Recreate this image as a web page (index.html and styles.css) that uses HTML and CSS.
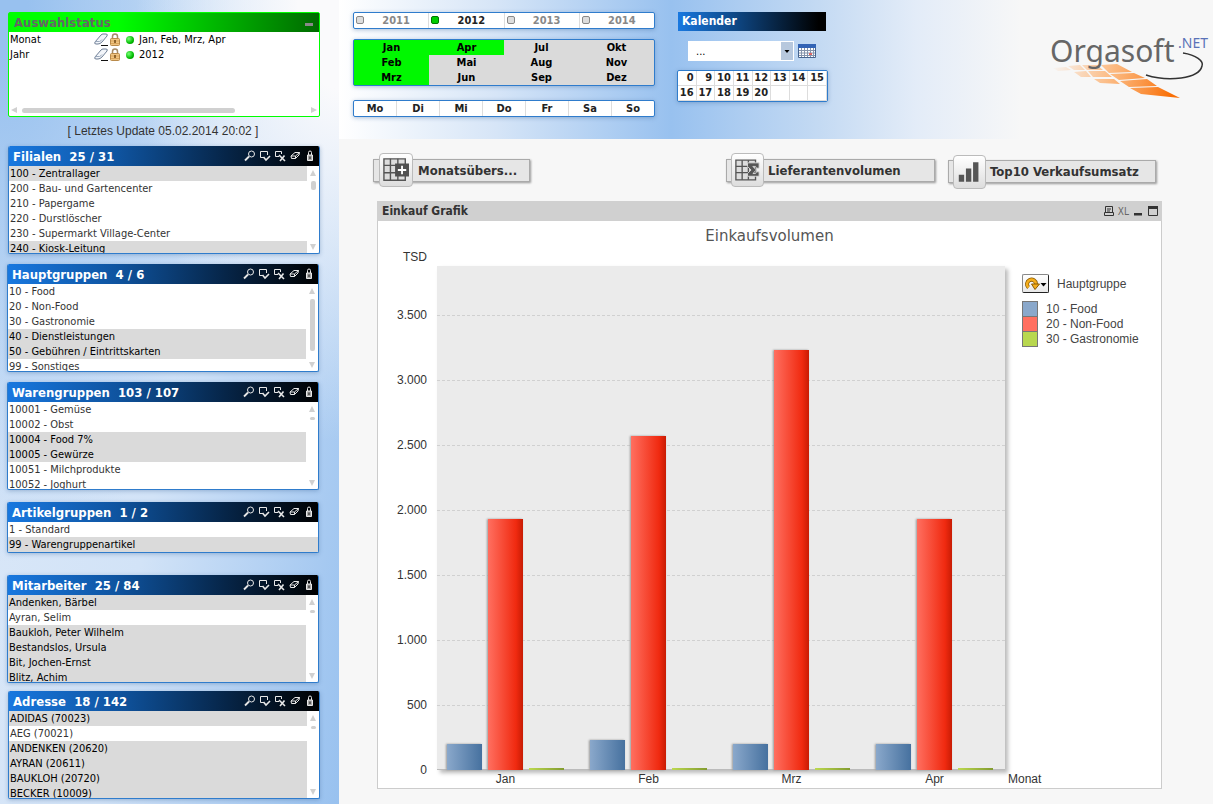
FILE: index.html
```html
<!DOCTYPE html>
<html lang="de">
<head>
  <meta charset="UTF-8">
  <meta name="viewport" content="width=device-width, initial-scale=1.0">
  <title>Orgasoft.NET - Einkauf</title>
  <link rel="stylesheet" href="styles.css">
</head>
<body>
  <!-- Icons -->
  <svg class="sprite" aria-hidden="true">
    <symbol id="i-search" viewBox="0 0 12 12"><circle cx="7.5" cy="4" r="3"/><path d="M5 6.500L1 10.500" stroke-width="1.800"/></symbol>
    <symbol id="i-check" viewBox="0 0 12 12"><path d="M5 7.500H1.500V1.500H8.500V5"/><path d="M4.500 7L7 10L11 6" stroke-width="1.600"/></symbol>
    <symbol id="i-cross" viewBox="0 0 12 12"><path d="M5 6.500H1.500V1.500H7.500V4"/><path d="M5 5L11 11M10.500 5.500L6 11" stroke-width="1.600"/></symbol>
    <symbol id="i-clear" viewBox="0 0 12 12"><path d="M2 6L6 2.500H10.500L10 5L6.500 8.500H2.500ZM2 6H6.500L10.500 2.500M6.500 6V8.500"/></symbol>
    <symbol id="i-lock" viewBox="0 0 12 12"><path d="M4.500 5V2.500Q4.500 1 6 1T7.500 2.500V5"/><path d="M3.500 5H8.500V10.500H3.500Z" fill="#aaa"/><path d="M6 6.500V9" stroke="#111"/></symbol>
    <symbol id="i-eraser" viewBox="0 0 15 13"><path d="M1 9L7 2Q8 1 9 1H12Q14 1 13 3L8 9Q6 11 4 11H2Q0 11 1 9Z" fill="#f2f5fa" stroke="#6f7f96"/><path d="M1.500 8.500H5.500Q7 8 8 6.500" fill="none" stroke="#9caabd"/><path d="M7 12.500H14" stroke="#111"/></symbol>
    <symbol id="i-goldlock" viewBox="0 0 12 13"><path d="M3.500 6V3.500Q3.500 1 6 1T8.500 3.500V6" fill="none" stroke="#a58a66" stroke-width="1.500"/><rect x="1.500" y="5.500" width="9" height="7" rx="1" fill="#f0c583" stroke="#b98a4a"/><path d="M2 8H10M2 10.500H10" stroke="#d9a55c"/><path d="M6 7V10" stroke="#704915" stroke-width="1.500"/></symbol>
  </svg>

  <aside class="sidebar">
    <section class="status">
      <header class="status-head"><h2>Auswahlstatus</h2><button class="minimize" aria-label="Minimieren"></button></header>
      <div class="status-body">
        <div class="status-row"><span class="field">Monat</span><svg class="eraser"><use href="#i-eraser"/></svg><svg class="goldlock"><use href="#i-goldlock"/></svg><i class="dot"></i><span>Jan, Feb, Mrz, Apr</span></div>
        <div class="status-row"><span class="field">Jahr</span><svg class="eraser"><use href="#i-eraser"/></svg><svg class="goldlock"><use href="#i-goldlock"/></svg><i class="dot"></i><span>2012</span></div>
      </div>
      <div class="hscroll"><i class="arrow left"></i><i class="track"><i class="thumb"></i></i><i class="arrow right"></i></div>
    </section>
    <p class="update">[ Letztes Update 05.02.2014 20:02 ]</p>

    <section class="panel wide">
      <header class="panel-head"><h2>Filialen&nbsp; 25 / 31</h2><div class="tools"></div></header>
      <div class="panel-body">
        <ul class="list">
          <li class="out">100 - Zentrallager</li>
          <li>200 - Bau- und Gartencenter</li>
          <li>210 - Papergame</li>
          <li>220 - Durstlöscher</li>
          <li>230 - Supermarkt Village-Center</li>
          <li class="out">240 - Kiosk-Leitung</li>
        </ul>
        <div class="vscroll"><i class="arrow up"></i><i class="thumb medium"></i><i class="arrow down"></i></div>
      </div>
    </section>

    <section class="panel">
      <header class="panel-head"><h2>Hauptgruppen&nbsp; 4 / 6</h2><div class="tools"></div></header>
      <div class="panel-body">
        <ul class="list">
          <li>10 - Food</li>
          <li>20 - Non-Food</li>
          <li>30 - Gastronomie</li>
          <li class="out">40 - Dienstleistungen</li>
          <li class="out">50 - Gebühren / Eintrittskarten</li>
          <li>99 - Sonstiges</li>
        </ul>
        <div class="vscroll"><i class="arrow up"></i><i class="thumb long"></i><i class="arrow down"></i></div>
      </div>
    </section>

    <section class="panel goods">
      <header class="panel-head"><h2>Warengruppen&nbsp; 103 / 107</h2><div class="tools"></div></header>
      <div class="panel-body">
        <ul class="list">
          <li>10001 - Gemüse</li>
          <li>10002 - Obst</li>
          <li class="out">10004 - Food 7%</li>
          <li class="out">10005 - Gewürze</li>
          <li>10051 - Milchprodukte</li>
          <li>10052 - Joghurt</li>
        </ul>
        <div class="vscroll"><i class="arrow up"></i><i class="thumb"></i><i class="arrow down"></i></div>
      </div>
    </section>

    <section class="panel articles">
      <header class="panel-head"><h2>Artikelgruppen&nbsp; 1 / 2</h2><div class="tools"></div></header>
      <div class="panel-body">
        <ul class="list">
          <li>1 - Standard</li>
          <li class="out">99 - Warengruppenartikel</li>
        </ul>
      </div>
    </section>

    <section class="panel staff">
      <header class="panel-head"><h2>Mitarbeiter&nbsp; 25 / 84</h2><div class="tools"></div></header>
      <div class="panel-body">
        <ul class="list">
          <li class="out">Andenken, Bärbel</li>
          <li>Ayran, Selim</li>
          <li class="out">Baukloh, Peter Wilhelm</li>
          <li class="out">Bestandslos, Ursula</li>
          <li class="out">Bit, Jochen-Ernst</li>
          <li class="out">Blitz, Achim</li>
        </ul>
        <div class="vscroll"><i class="arrow up"></i><i class="thumb"></i><i class="arrow down"></i></div>
      </div>
    </section>

    <section class="panel wide address">
      <header class="panel-head"><h2>Adresse&nbsp; 18 / 142</h2><div class="tools"></div></header>
      <div class="panel-body">
        <ul class="list">
          <li class="out">ADIDAS (70023)</li>
          <li>AEG (70021)</li>
          <li class="out">ANDENKEN (20620)</li>
          <li class="out">AYRAN (20611)</li>
          <li class="out">BAUKLOH (20720)</li>
          <li class="out">BECKER (10009)</li>
        </ul>
        <div class="vscroll"><i class="arrow up"></i><i class="thumb"></i><i class="arrow down"></i></div>
      </div>
    </section>
  </aside>

  <main class="main">
    <header class="topbar">
      <div class="periods">
        <div class="years">
          <button><i></i><span>2011</span></button>
          <button class="on"><i></i><span>2012</span></button>
          <button><i></i><span>2013</span></button>
          <button><i></i><span>2014</span></button>
        </div>
        <div class="months">
          <button class="on">Jan</button><button class="on">Feb</button><button class="on">Mrz</button>
          <button class="on">Apr</button><button>Mai</button><button>Jun</button>
          <button>Jul</button><button>Aug</button><button>Sep</button>
          <button>Okt</button><button>Nov</button><button>Dez</button>
        </div>
        <div class="weekdays">
          <button>Mo</button><button>Di</button><button>Mi</button><button>Do</button><button>Fr</button><button>Sa</button><button>So</button>
        </div>
      </div>

      <div class="calendar">
        <h2><label for="datum">Kalender</label></h2>
        <div class="date">
          <div class="combo">
            <select id="datum"><option>...</option></select>
            <svg viewBox="0 0 12 18" aria-hidden="true"><path d="M0 0H12V18H0Z" fill="#b7c8dd"/><path d="M3.500 8H8.500L6 11Z"/></svg>
          </div>
          <button class="pick" aria-label="Datum wählen">
            <svg viewBox="0 0 18 14"><path d="M0.500 0.500H17.500V13.500H0.500Z" fill="#fff" stroke="#46648f"/><path d="M0 0H18V4H0Z" fill="#3263b5"/><path d="M1 6.500H17M1 9H17M1 11.500H17M3.500 4V13M6.500 4V13M9.500 4V13M12.500 4V13M15.500 4V13" stroke="#8493ab"/><path d="M11 9H14V11H11Z" fill="#d66"/></svg>
          </button>
        </div>
        <div class="days">
          <button>0</button><button>9</button><button>10</button><button>11</button><button>12</button><button>13</button><button>14</button><button>15</button>
          <button>16</button><button>17</button><button>18</button><button>19</button><button>20</button><span></span><span></span><span></span>
        </div>
      </div>

      <svg class="logo" viewBox="0 0 163 75" role="img" aria-label="Orgasoft.NET">
        <defs>
          <linearGradient id="tiles" gradientUnits="userSpaceOnUse" x1="0" y1="36" x2="120" y2="66">
            <stop offset="0" stop-color="#fda55a" stop-opacity="0"/>
            <stop offset="0.5" stop-color="#fda55a" stop-opacity="0.75"/>
            <stop offset="1" stop-color="#f96f06"/>
          </linearGradient>
        </defs>
        <g fill="url(#tiles)">
          <path d="M3 37L16 36L21 39L8 40ZM18 35L30 34L35 39L24 39ZM24 41L36 40L41 46L31 46Z"/>
          <path d="M32 34H47L53 39H37ZM38 40H55L62 46H43ZM44 48H64L70 53L50 52Z"/>
          <path d="M51 34L67 33L82 41L59 42ZM60 43L84 42L95 47L69 49ZM70 50L97 48L107 55L79 56ZM80 57L108 56L130 67L91 63Z"/>
        </g>
        <path d="M133 22C146 24 154 30 152 35C149 48 118 51 96 44" fill="none" stroke="#333" stroke-width="1.500"/>
        <text x="0" y="31" class="brand">Orgasoft</text>
        <text x="128" y="17" class="net">.NET</text>
      </svg>
    </header>

    <nav class="actions">
      <button class="action month">
        <svg viewBox="0 0 28 28"><path d="M1 2H24V25H1Z" fill="#ddd" stroke="#555" stroke-width="1.500"/><path d="M1 9H24M1 17H24M8 2V25M16 2V25" stroke="#555" stroke-width="1.500"/><path d="M13 7H28V21H13Z" fill="#505050"/><path d="M16 14H25M20.500 9.500V18.500" stroke="#fff" stroke-width="2"/></svg>
        <span>Monatsübers...</span>
      </button>
      <button class="action supplier">
        <svg viewBox="0 0 28 28"><path d="M1 3H23V25H1Z" fill="#ddd" stroke="#555" stroke-width="1.500"/><path d="M1 10H23M1 17H23M8 3V25M15 3V25" stroke="#555" stroke-width="1.500"/><path d="M14 6H27V12H24L23 10H20L24 14L20 18H23L24 16H27V21H14V18L18 14L14 10Z" fill="#555" stroke="#ddd"/></svg>
        <span>Lieferantenvolumen</span>
      </button>
      <button class="action top10">
        <svg viewBox="0 0 28 28"><path d="M2 17H8V25H2ZM10 10H16V25H10ZM18 3H24V25H18Z" fill="#555"/></svg>
        <span>Top10 Verkaufsumsatz</span>
      </button>
    </nav>

    <section class="chart">
      <header class="chart-head">
        <h2>Einkauf Grafik</h2>
        <button aria-label="Drucken"><svg viewBox="0 0 12 12"><path d="M2.500 7V1.500H9.500V7M1.500 7.500H10.500V10.500H1.500ZM4 4H8M4 6H7" fill="none" stroke="#333"/></svg></button>
        <button class="xl">XL</button>
        <button aria-label="Minimieren"><svg viewBox="0 0 12 12"><path d="M2 8H10V10.500H2Z" fill="#333"/></svg></button>
        <button aria-label="Maximieren"><svg viewBox="0 0 12 12"><path d="M1.500 1.500H10.500V10.500H1.500Z" fill="none" stroke="#333"/><path d="M1 1H11V4H1Z" fill="#333"/></svg></button>
      </header>
      <h3>Einkaufsvolumen</h3>
      <div class="chart-body">
        <div class="unit">TSD</div>
        <div class="ticks"><span>3.500</span><span>3.000</span><span>2.500</span><span>2.000</span><span>1.500</span><span>1.000</span><span>500</span><span>0</span></div>
        <div class="grid"><i></i><i></i><i></i><i></i><i></i><i></i><i></i></div>
        <div class="bars" id="bars"></div>
        <div class="labels" id="labels"></div>
        <div class="axis-name">Monat</div>
        <div class="legend">
          <div class="legend-head">
            <button aria-label="Gruppe wechseln"><svg viewBox="0 0 25 17"><path d="M5.500 12.500A4.500 4.500 0 1 1 13 9" fill="none" stroke="#8a5a00" stroke-width="4"/><path d="M5.500 12.500A4.500 4.500 0 1 1 13 9" fill="none" stroke="#f5ae1c" stroke-width="2.500"/><path d="M8.500 9H16.500L12 14.500Z" fill="#f5ae1c" stroke="#8a5a00"/><path d="M17.500 8H23.500L20.500 11.500Z"/></svg></button>
            <span>Hauptgruppe</span>
          </div>
          <div class="key"><i class="food"></i>10 - Food</div>
          <div class="key"><i class="nonfood"></i>20 - Non-Food</div>
          <div class="key"><i class="gastro"></i>30 - Gastronomie</div>
        </div>
      </div>
    </section>
  </main>

  <script>
    // Einkaufsvolumen in TSD
    const werte = [
      { monat: 'Jan', food: 200, nonfood: 1930, gastro: 14 },
      { monat: 'Feb', food: 230, nonfood: 2570, gastro: 14 },
      { monat: 'Mrz', food: 200, nonfood: 3230, gastro: 14 },
      { monat: 'Apr', food: 200, nonfood: 1930, gastro: 14 }
    ];
    const max = 3877;

    document.getElementById('bars').innerHTML = werte.map(w => `
      <div class="group">${['food', 'nonfood', 'gastro'].map(k =>
        `<i class="${k}" style="height:${w[k] / max * 100}%"></i>`).join('')}</div>`).join('');
    document.getElementById('labels').innerHTML = werte.map(w => `<span>${w.monat}</span>`).join('');

    const tools = [['search', 'Suchen'], ['check', 'Alle auswählen'], ['cross', 'Ausgeschlossene auswählen'], ['clear', 'Löschen'], ['lock', 'Sperren']];
    document.querySelectorAll('.tools').forEach(el => {
      el.innerHTML = tools.map(([id, label]) =>
        `<button aria-label="${label}"><svg><use href="#i-${id}"/></svg></button>`).join('');
    });
  </script>
</body>
</html>
```
FILE: styles.css
```css
* {
  box-sizing: border-box;
}
body {
  margin: 0;
  min-height: 100vh;
  display: flex;
  background: #f7f7f7;
  font-family: "DejaVu Sans Condensed", "DejaVu Sans", sans-serif;
  font-size: 11px;
  line-height: 15px;
  color: #333;
}
h2, h3, p, ul {
  margin: 0;
  padding: 0;
  font-weight: normal;
}
button {
  margin: 0;
  padding: 0;
  border: none;
  background: none;
  font: inherit;
  color: inherit;
  cursor: pointer;
}
svg {
  display: block;
}
.sprite {
  display: none;
}

/* Sidebar */
.sidebar {
  flex: 0 0 339px;
  padding: 12px 20px 5px 7px;
  background:
    radial-gradient(ellipse 60% 55% at 100% 0, #fafafc 20%, rgba(250, 250, 252, 0) 100%),
    radial-gradient(ellipse 80% 70% at 0 0, #98c1ef 10%, rgba(152, 193, 239, 0) 100%),
    linear-gradient(100deg, #dbe8f8 0%, #d2e3f7 50%, #98c1ef 100%);
}
.status {
  height: 105px;
  margin: 0 -1px 0 1px;
  border: 1px solid #0f0;
  border-radius: 2px;
  background: #fff;
  color: #000;
  display: flex;
  flex-direction: column;
}
.status-head {
  display: flex;
  justify-content: space-between;
  align-items: center;
  height: 19px;
  padding: 0 6px 0 5px;
  background: linear-gradient(90deg, #0f0 0%, #0f0 35%, #006a00 100%);
}
.status-head h2 {
  font-size: 13px;
  font-weight: bold;
  color: #666;
}
.minimize {
  width: 8px;
  height: 3px;
  margin-top: 4px;
  background: #888;
}
.status-body {
  flex: 1;
}
.status-row {
  display: flex;
  align-items: center;
  height: 15px;
  padding-left: 1px;
}
.field {
  width: 84px;
}
.eraser {
  width: 15px;
  height: 13px;
}
.goldlock {
  width: 12px;
  height: 13px;
}
.dot {
  width: 8px;
  height: 8px;
  margin: 0 5px;
  border-radius: 50%;
  background: radial-gradient(circle at 35% 35%, #7f7, #0b0 60%, #070);
}
.hscroll {
  display: flex;
  align-items: center;
  height: 12px;
  padding: 0 2px;
}
.hscroll .track {
  flex: 1;
  margin: 0 5px;
}
.hscroll .thumb {
  display: block;
  width: 75%;
  height: 5px;
  border-radius: 3px;
  background: #d0d0d0;
}
.arrow {
  border: 3px solid transparent;
}
.arrow.left {
  border-left: 0;
  border-right: 6px solid #d0d0d0;
}
.arrow.right {
  border-right: 0;
  border-left: 6px solid #d0d0d0;
}
.arrow.up {
  border-top: 0;
  border-bottom: 6px solid #d0d0d0;
}
.arrow.down {
  border-bottom: 0;
  border-top: 6px solid #d0d0d0;
  margin-top: auto;
}
.update {
  height: 29px;
  padding-top: 6px;
  text-align: center;
  font: 12px/16px "Liberation Sans", Arial, sans-serif;
}
.panel {
  height: 108px;
  margin-bottom: 10px;
  border: 1px solid #2f7ccc;
  border-top: 0;
  border-radius: 2px;
  background: #fff;
  overflow: hidden;
  box-shadow: 0 1px 4px rgba(70, 110, 160, 0.4);
}
.panel.wide {
  margin-left: 1px;
  margin-right: -1px;
}
.panel.goods {
  margin-bottom: 12px;
}
.panel.articles {
  height: 51px;
  margin-bottom: 22px;
}
.panel.staff {
  margin-bottom: 8px;
}
.panel.address {
  margin-bottom: 0;
}
.panel-head {
  display: flex;
  justify-content: space-between;
  align-items: center;
  height: 20px;
  margin: 0 -1px;
  padding: 0 4px 0 5px;
  background: linear-gradient(90deg, #1878e0 0%, #0f54a0 35%, #062548 70%, #000 100%);
  color: #fff;
}
.panel-head h2 {
  font-size: 13px;
  font-weight: bold;
}
.tools {
  display: flex;
  gap: 3px;
}
.tools svg {
  width: 12px;
  height: 12px;
  fill: none;
  stroke: #e8e8e8;
}
.panel-body {
  display: flex;
  height: 87px;
}
.articles .panel-body {
  height: 30px;
}
.list {
  flex: 1;
  list-style: none;
}
.list li {
  height: 15px;
  padding-left: 1px;
  white-space: nowrap;
}
.list .out {
  background: #dadada;
  color: #000;
}
.vscroll {
  display: flex;
  flex-direction: column;
  align-items: center;
  width: 12px;
  padding: 4px 0 3px;
}
.vscroll .thumb {
  width: 5px;
  height: 3px;
  margin-top: 5px;
  border-radius: 2px;
  background: #d0d0d0;
}
.vscroll .thumb.medium {
  height: 9px;
}
.vscroll .thumb.long {
  height: 52px;
}

/* Main area */
.main {
  flex: 1;
  min-width: 0;
}
.topbar {
  display: flex;
  align-items: flex-start;
  height: 139px;
  padding: 12px 0 0 14px;
  background: linear-gradient(90deg, #fff 0%, #d6e5f7 18%, #98c1ef 38%, #c4daf3 55%, #e3ecf8 66%, #f7f7f7 78%);
}
.periods {
  width: 302px;
  font-weight: bold;
  color: #222;
}
.years, .weekdays {
  display: flex;
  height: 17px;
  border: 1px solid #2f7ccc;
  border-radius: 2px;
  background: #fff;
  box-shadow: 0 1px 4px rgba(70, 110, 160, 0.4);
}
.years button {
  flex: 1;
  display: flex;
  align-items: center;
  padding-left: 2px;
  border-right: 1px solid #ddd;
  color: #888;
}
.years button:last-child, .weekdays button:last-child {
  border-right: 0;
}
.years i {
  width: 8px;
  height: 8px;
  margin-bottom: 2px;
  border: 1px solid #888;
  border-radius: 2px;
  background: #ddd;
}
.years span {
  flex: 1;
  text-align: center;
}
.years .on {
  color: #222;
}
.years .on i {
  border-color: #070;
  background: #0c0;
}
.months {
  display: grid;
  grid-template-rows: repeat(3, 15px);
  grid-template-columns: repeat(4, 1fr);
  grid-auto-flow: column;
  margin: 10px 0 14px;
  border: 1px solid #2f7ccc;
  border-radius: 2px;
  background: #dadada;
  color: #000;
  box-shadow: 0 1px 4px rgba(70, 110, 160, 0.4);
}
.months .on {
  background: #00f800;
}
.weekdays button {
  flex: 1;
  border-right: 1px solid #ddd;
}
.calendar {
  width: 151px;
  margin-left: 22px;
}
.calendar h2 {
  height: 19px;
  margin: 0 2px 10px 1px;
  padding-left: 4px;
  background: linear-gradient(90deg, #1878e0, #000 95%);
  color: #fff;
  font-size: 12px;
  font-weight: bold;
  line-height: 18px;
}
.date {
  display: flex;
  align-items: center;
  gap: 4px;
  padding-left: 11px;
}
.combo {
  display: grid;
  width: 106px;
  height: 20px;
  background: #fff;
}
.combo select {
  grid-area: 1 / 1;
  appearance: none;
  border: 0;
  padding: 0 8px;
  background: none;
  font: inherit;
  color: #000;
}
.combo svg {
  grid-area: 1 / 1;
  justify-self: end;
  align-self: center;
  width: 12px;
  height: 18px;
  margin-right: 1px;
  pointer-events: none;
}
.pick svg {
  width: 18px;
  height: 14px;
}
.days {
  display: grid;
  grid-template-columns: repeat(8, 1fr);
  grid-auto-rows: 15px;
  margin-top: 9px;
  border: 1px solid #2f7ccc;
  border-radius: 2px;
  background: #fff;
  font-weight: bold;
  color: #222;
  box-shadow: 0 1px 4px rgba(70, 110, 160, 0.4);
}
.days > * {
  padding-right: 2px;
  border-right: 1px solid #ddd;
  border-bottom: 1px solid #ddd;
  text-align: right;
  line-height: 14px;
}
.logo {
  width: 163px;
  height: 75px;
  margin: 19px 0 0 auto;
}
.brand {
  font-family: "Noto Sans", sans-serif;
  font-size: 30px;
  fill: #666;
}
.net {
  font-family: "Noto Sans", sans-serif;
  font-size: 14px;
  fill: #5a72b8;
}

/* Buttons above the chart */
.actions {
  display: flex;
  align-items: center;
  height: 62px;
  padding-left: 34px;
}
.action {
  display: flex;
  align-items: center;
  height: 23px;
  border: 1px solid #aaa;
  background: #e6e6e6;
  box-shadow: 1px 1px 2px #999;
  font-size: 13px;
  font-weight: bold;
  white-space: nowrap;
}
.action svg {
  flex: none;
  width: 34px;
  height: 34px;
  margin: 0 5px;
  padding: 3px;
  border: 1px solid #bbb;
  border-radius: 4px;
  background: linear-gradient(#fff, #ddd);
}
.month {
  width: 157px;
}
.supplier {
  width: 209px;
  margin-left: auto;
}
.top10 {
  width: 208px;
  margin: 3px 57px 0 13px;
}
.supplier svg, .top10 svg {
  width: 33px;
  margin: 0 4px;
}

/* Chart */
.chart {
  margin: 0 51px 15px 38px;
  border: 1px solid #ccc;
  border-top: 0;
  background: #fff;
}
.chart-head {
  display: flex;
  align-items: center;
  gap: 3px;
  height: 20px;
  margin: 0 -1px;
  padding: 0 3px 0 5px;
  background: #d0d0d0;
}
.chart-head h2 {
  flex: 1;
  font-size: 12px;
  font-weight: bold;
}
.chart-head svg {
  width: 12px;
  height: 12px;
}
.xl {
  font: 10px "DejaVu Sans Condensed", sans-serif;
  color: #666;
}
.chart h3 {
  padding-top: 6px;
  text-align: center;
  font-family: "DejaVu Sans", sans-serif;
  font-size: 15px;
  line-height: 18px;
  color: #555;
}
.chart-body {
  display: grid;
  grid-template: 21px 504px 18px / 59px 1fr 156px;
  font: 12px/16px "Liberation Sans", Arial, sans-serif;
}
.unit, .ticks {
  text-align: right;
  padding-right: 10px;
}
.unit {
  padding-top: 4px;
}
.ticks {
  grid-area: 2 / 1;
  padding-top: 41px;
}
.ticks span {
  display: block;
  height: 65px;
}
.ticks span:last-child {
  height: 16px;
}
.grid {
  grid-area: 2 / 2;
  padding-top: 49px;
  background: #ebebeb;
  border-bottom: 1px solid #bbb;
  box-shadow: 3px 3px 4px #bbb;
}
.grid i {
  display: block;
  height: 65px;
  border-top: 1px dashed #d0d0d0;
}
.bars {
  grid-area: 2 / 2;
  display: flex;
  justify-content: space-between;
  padding: 0 12px 0 10px;
}
.group {
  display: flex;
  align-items: flex-end;
  gap: 6px;
}
.group i {
  width: 35px;
  box-shadow: -1px 0 2px #999;
}
.group .food {
  background: linear-gradient(90deg, #8aa8cb, #46719f);
}
.group .nonfood {
  background: linear-gradient(90deg, #ff6f60, #f02a10 80%, #c81c04);
}
.group .gastro {
  background: linear-gradient(90deg, #bcd850, #839c30);
  box-shadow: none;
}
.labels {
  grid-area: 3 / 2;
  display: flex;
  justify-content: space-between;
  padding: 1px 12px 0 10px;
}
.labels span {
  width: 117px;
  text-align: center;
}
.axis-name {
  grid-area: 3 / 3;
  padding: 1px 0 0 3px;
}
.legend {
  grid-area: 2 / 3;
  padding: 8px 0 0 17px;
  color: #444;
}
.legend-head {
  display: flex;
  align-items: center;
  gap: 8px;
  margin-bottom: 8px;
}
.legend-head button {
  border: 1px solid #888;
  border-right-color: #222;
  border-bottom-color: #222;
  border-radius: 2px;
  background: linear-gradient(#fff, #e8e8e8);
}
.legend-head svg {
  width: 25px;
  height: 17px;
}
.key {
  display: flex;
  align-items: center;
  gap: 8px;
  height: 15px;
}
.key i {
  width: 16px;
  height: 16px;
  border: 1px solid #777;
}
.key .food {
  background: #8aa8cb;
}
.key .nonfood {
  background: #ff6f60;
}
.key .gastro {
  background: #b8d74f;
}
```
